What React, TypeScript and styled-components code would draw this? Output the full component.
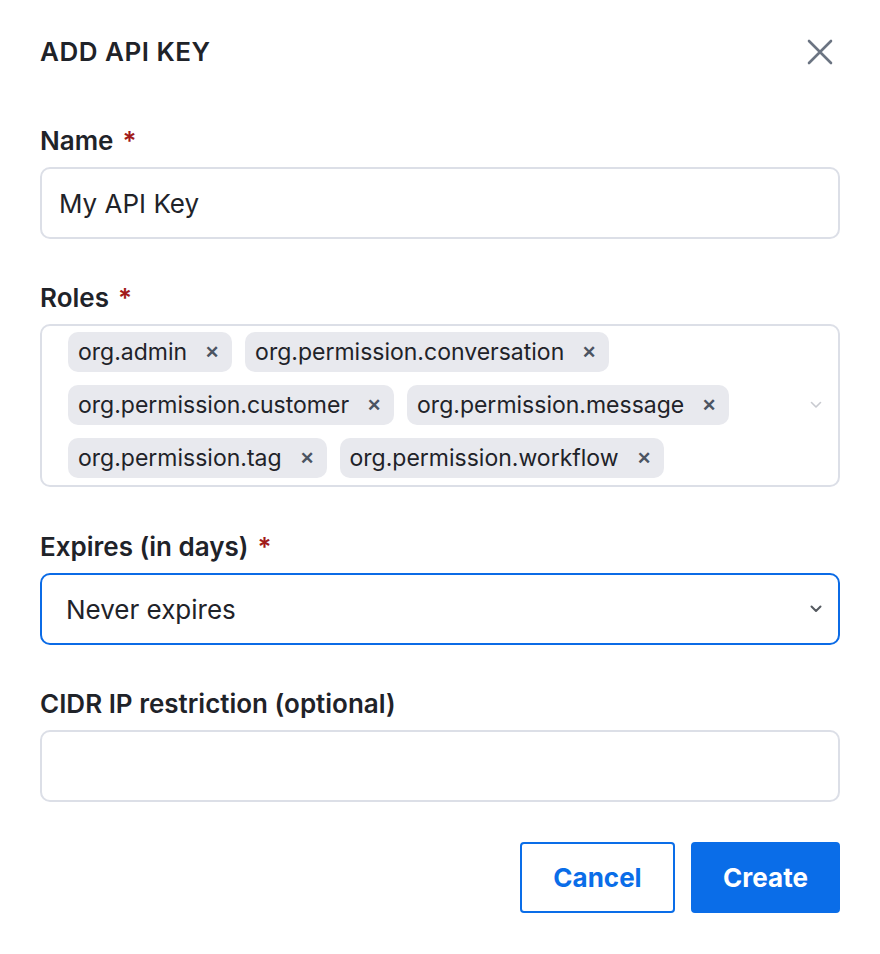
import React from "react";
import styled, { createGlobalStyle } from "styled-components";

const Global = createGlobalStyle`
  html, body { margin: 0; padding: 0; background: #ffffff; }
  body { font-family: Inter, "Noto Sans", sans-serif; color: #1f2329; }
  * { box-sizing: border-box; }
`;

const Modal = styled.div`
  width: 880px;
  padding: 36px 40px 40px 40px;
  display: flex;
  flex-direction: column;
`;

const Header = styled.div`
  display: flex;
  align-items: center;
  justify-content: space-between;
  height: 32px;
  margin-bottom: 57px;
`;

const Title = styled.h2`
  margin: 0;
  font-size: 26px;
  font-weight: 600;
  letter-spacing: 0.5px;
  line-height: 32px;
  color: #1f2329;
`;

const CloseButton = styled.button`
  border: 0;
  background: none;
  padding: 0;
  width: 28px;
  height: 28px;
  margin-right: 6px;
  display: flex;
  align-items: center;
  justify-content: center;
  color: #6b7482;
  cursor: pointer;
`;

const Field = styled.div<{ $gap?: number }>`
  display: flex;
  flex-direction: column;
  margin-bottom: ${(p) => p.$gap ?? 43}px;
`;

const Label = styled.label`
  font-size: 26px;
  font-weight: 600;
  line-height: 32px;
  margin-bottom: 10px;
  color: #1f2329;
`;

const Req = styled.span`
  color: #a11a1a;
  margin-left: 9px;
`;

const Box = styled.div<{ $focused?: boolean }>`
  position: relative;
  width: 800px;
  height: 72px;
  border: 2px solid ${(p) => (p.$focused ? "#0b6be6" : "#dcdfe7")};
  border-radius: 10px;
  display: flex;
  align-items: center;
  font-size: 26px;
  color: #1f2329;
`;

const InputText = styled.span<{ $pad: number }>`
  padding-left: ${(p) => p.$pad}px;
  flex: 1;
`;

const MultiBox = styled.div`
  width: 800px;
  min-height: 163px;
  border: 2px solid #dcdfe7;
  border-radius: 10px;
  display: flex;
  align-items: center;
  padding: 5px 0 7px 26px;
`;

const Chips = styled.div`
  flex: 1;
  display: flex;
  flex-wrap: wrap;
  column-gap: 13px;
  row-gap: 13px;
`;

const Chip = styled.div`
  height: 40px;
  background: #e8e9ee;
  border-radius: 10px;
  display: flex;
  align-items: center;
  padding: 0 13px 0 10px;
  font-size: 23px;
  color: #1f2329;
`;

const ChipX = styled.span`
  margin-left: 18px;
  font-size: 17px;
  font-weight: 700;
  color: #4b5462;
  display: flex;
  align-items: center;
`;

const Chevron = styled.div<{ $tone: string }>`
  width: 20px;
  display: flex;
  align-items: center;
  justify-content: center;
  color: ${(p) => p.$tone};
  margin-right: 12px;
`;

const Actions = styled.div`
  display: flex;
  justify-content: flex-end;
  gap: 16px;
`;

const Button = styled.button<{ $primary?: boolean }>`
  height: 71px;
  padding: 0;
  width: ${(p) => (p.$primary ? 149 : 155)}px;
  border-radius: 4px;
  font-family: Inter, "Noto Sans", sans-serif;
  font-size: 26px;
  font-weight: 700;
  border: 2px solid #0a6de8;
  background: ${(p) => (p.$primary ? "#0a6de8" : "#ffffff")};
  color: ${(p) => (p.$primary ? "#ffffff" : "#0a6de8")};
  cursor: pointer;
`;

const ChevronIcon = ({ w = 1.8 }: { w?: number }) => (
  <svg width="12" height="8" viewBox="0 0 12 8" fill="none">
    <path d="M1.5 1.5 L6 6 L10.5 1.5" stroke="currentColor" strokeWidth={w} strokeLinecap="round" strokeLinejoin="round" />
  </svg>
);

const roles = [
  "org.admin",
  "org.permission.conversation",
  "org.permission.customer",
  "org.permission.message",
  "org.permission.tag",
  "org.permission.workflow",
];

export default function App() {
  return (
    <>
      <Global />
      <Modal>
        <Header>
          <Title>ADD API KEY</Title>
          <CloseButton aria-label="Close">
            <svg width="26" height="26" viewBox="0 0 26 26" fill="none">
              <path d="M2 2 L24 24 M24 2 L2 24" stroke="currentColor" strokeWidth="2.6" strokeLinecap="round" />
            </svg>
          </CloseButton>
        </Header>

        <Field>
          <Label>
            Name<Req>*</Req>
          </Label>
          <Box>
            <InputText $pad={17}>My API Key</InputText>
          </Box>
        </Field>

        <Field $gap={44}>
          <Label>
            Roles<Req>*</Req>
          </Label>
          <MultiBox>
            <Chips>
              {roles.map((r) => (
                <Chip key={r}>
                  {r}
                  <ChipX>✕</ChipX>
                </Chip>
              ))}
            </Chips>
            <Chevron $tone="#c8cad0">
              <ChevronIcon w={1.6} />
            </Chevron>
          </MultiBox>
        </Field>

        <Field $gap={43}>
          <Label>
            Expires (in days)<Req>*</Req>
          </Label>
          <Box $focused>
            <InputText $pad={24}>Never expires</InputText>
            <Chevron $tone="#555a60">
              <ChevronIcon w={2} />
            </Chevron>
          </Box>
        </Field>

        <Field $gap={40}>
          <Label>CIDR IP restriction (optional)</Label>
          <Box />
        </Field>

        <Actions>
          <Button>Cancel</Button>
          <Button $primary>Create</Button>
        </Actions>
      </Modal>
    </>
  );
}
